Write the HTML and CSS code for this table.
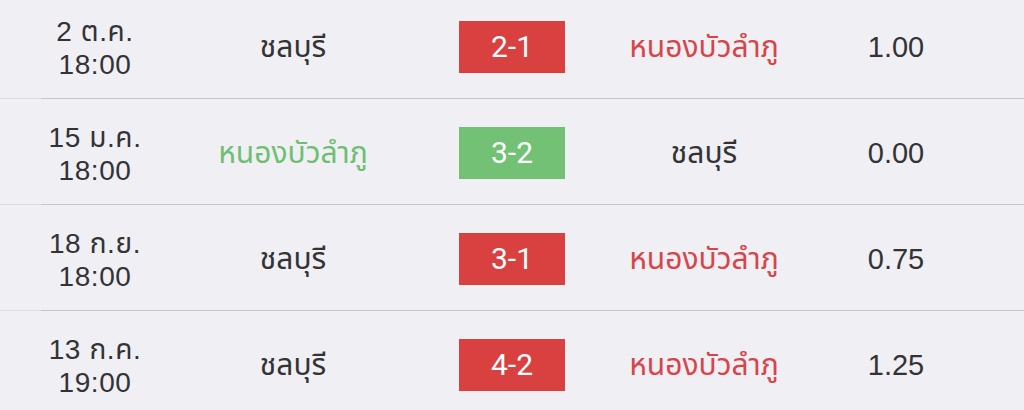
FILE: index.html
```html
<!DOCTYPE html>
<html lang="th">
<head>
<meta charset="utf-8">
<link rel="stylesheet" href="styles.css">
</head>
<body>
<div class="list">
  <div class="row">
    <div class="cell date">2 ต.ค.<br>18:00</div>
    <div class="cell team">ชลบุรี</div>
    <div class="cell"><span class="score loss">2-1</span></div>
    <div class="cell team red">หนองบัวลำภู</div>
    <div class="cell odds">1.00</div>
  </div>
  <div class="row">
    <div class="cell date">15 ม.ค.<br>18:00</div>
    <div class="cell team green">หนองบัวลำภู</div>
    <div class="cell"><span class="score win">3-2</span></div>
    <div class="cell team">ชลบุรี</div>
    <div class="cell odds">0.00</div>
  </div>
  <div class="row">
    <div class="cell date">18 ก.ย.<br>18:00</div>
    <div class="cell team">ชลบุรี</div>
    <div class="cell"><span class="score loss">3-1</span></div>
    <div class="cell team red">หนองบัวลำภู</div>
    <div class="cell odds">0.75</div>
  </div>
  <div class="row">
    <div class="cell date">13 ก.ค.<br>19:00</div>
    <div class="cell team">ชลบุรี</div>
    <div class="cell"><span class="score loss">4-2</span></div>
    <div class="cell team red">หนองบัวลำภู</div>
    <div class="cell odds">1.25</div>
  </div>
</div>
</body>
</html>
```

FILE: styles.css
```css
html, body {
  margin: 0;
  padding: 0;
  background: #efeff4;
  overflow: hidden;
}
body {
  font-family: "Liberation Sans", "Noto Sans Thai", "Noto Sans", sans-serif;
  color: #333336;
}
.list {
  margin-top: -7px;
}
.row {
  display: grid;
  grid-template-columns: 190px 206px 232px 152px 232px;
  height: 106px;
  box-sizing: border-box;
  border-bottom: 1px solid #c8c7cc;
  border-image: linear-gradient(to right, #dddde1 42px, #c4c4c9 42px) 1;
}
.cell {
  display: flex;
  align-items: center;
  justify-content: center;
  white-space: nowrap;
  text-align: center;
}
.date {
  font-size: 28px;
  letter-spacing: 0.6px;
  line-height: 33px;
  padding-top: 5px;
}
.team {
  font-size: 30px;
  padding-top: 5px;
}
.red { color: #d7444a; }
.green { color: #6fbf72; }
.odds {
  font-size: 29px;
  padding-top: 4px;
}
.score {
  display: flex;
  align-items: center;
  justify-content: center;
  width: 106px;
  height: 52px;
  margin-top: 2px;
  font-family: Roboto, "Liberation Sans", sans-serif;
  font-size: 30px;
  color: #ffffff;
}
.loss { background: #d94141; }
.win { background: #72c174; }
```
